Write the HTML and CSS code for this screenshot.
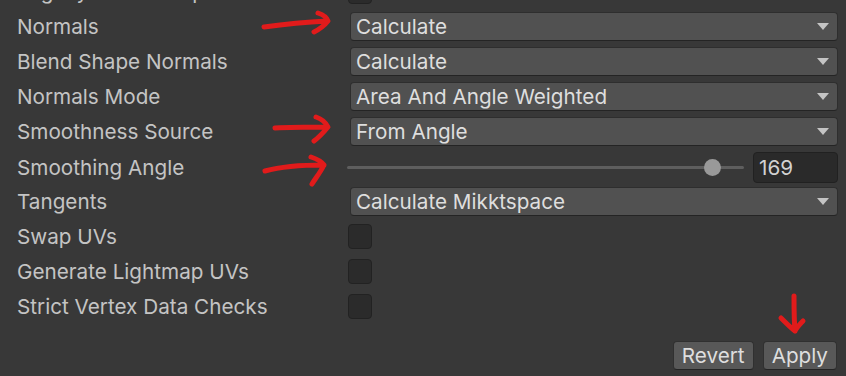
FILE: index.html
```html
<!DOCTYPE html>
<html>
<head>
<title>Model Import Settings: Geometry</title>
<link rel="stylesheet" href="styles.css">
</head>
<body>
<div class="inspector">

<div class="row">
  <span class="label">Legacy Blend Shape Normals</span>
  <span class="check"></span>
</div>

<div class="row">
  <span class="label">Normals</span>
  <div class="popup">Calculate<svg class="caret" width="12" height="7" viewBox="0 0 12 7"><polygon points="0,0 12,0 6,7"/></svg></div>
</div>

<div class="row">
  <span class="label">Blend Shape Normals</span>
  <div class="popup">Calculate<svg class="caret" width="12" height="7" viewBox="0 0 12 7"><polygon points="0,0 12,0 6,7"/></svg></div>
</div>

<div class="row">
  <span class="label">Normals Mode</span>
  <div class="popup">Area And Angle Weighted<svg class="caret" width="12" height="7" viewBox="0 0 12 7"><polygon points="0,0 12,0 6,7"/></svg></div>
</div>

<div class="row">
  <span class="label">Smoothness Source</span>
  <div class="popup">From Angle<svg class="caret" width="12" height="7" viewBox="0 0 12 7"><polygon points="0,0 12,0 6,7"/></svg></div>
</div>

<div class="row">
  <span class="label">Smoothing Angle</span>
  <div class="slider">
    <div class="track"><span class="thumb" style="left: calc((100% - 17px) * 0.939)"></span></div>
    <div class="number">169</div>
  </div>
</div>

<div class="row">
  <span class="label">Tangents</span>
  <div class="popup">Calculate Mikktspace<svg class="caret" width="12" height="7" viewBox="0 0 12 7"><polygon points="0,0 12,0 6,7"/></svg></div>
</div>

<div class="row">
  <span class="label">Swap UVs</span>
  <span class="check"></span>
</div>

<div class="row">
  <span class="label">Generate Lightmap UVs</span>
  <span class="check"></span>
</div>

<div class="row">
  <span class="label">Strict Vertex Data Checks</span>
  <span class="check"></span>
</div>

<div class="buttons">
  <button class="btn">Revert</button>
  <button class="btn">Apply</button>
</div>

</div>

<!-- hand-drawn annotations on top of the screenshot -->
<svg class="marks" width="846" height="376" viewBox="0 0 846 376">
  <path d="M264 27 C285 24 305 22 327 21 M318 13 C324 15 327 18 328 21 C324 26 318 30 314 32"/>
  <path d="M275 128 C292 127 310 127 327 127 M316 117 C322 119 326 123 328 127 C323 133 318 138 314 141"/>
  <path d="M265 171 C283 166 303 165 324 165 M311 157 C317 159 322 162 324 165 C320 173 315 179 312 184"/>
  <path d="M794 296 C794 308 794 320 795 331 M781 318 C786 323 791 328 795 331 C797 327 800 324 803 321"/>
</svg>
</body>
</html>
```

FILE: styles.css
```css
/* Unity dark skin inspector */

body
{ margin: 0;
background-color: #383838;
color: #c4c4c4;
font-family: Inter, "Noto Sans", sans-serif;
font-size: 20.7px;
overflow: hidden;
}

.inspector
{ margin-top: -23px;
padding: 0 8px 0 17px;
display: flex;
flex-direction: column;
gap: 6px;
}

.row
{ display: grid;
grid-template-columns: 332px 1fr;
align-items: center;
height: 29px;
}

.label
{ white-space: nowrap;
}

/* Popups */

.popup
{ display: flex;
align-items: center;
justify-content: space-between;
height: 27px;
margin-left: 1px;
padding: 0 8px 0 5px;
background-color: #515151;
border: 1px solid #2e2e2e;
border-bottom-color: #242424;
border-radius: 4px;
color: #dedede;
}

.caret
{ fill: #c4c4c4;
}

/* Slider */

.slider
{ display: flex;
align-items: center;
gap: 9px;
margin-left: -2px;
}

.track
{ position: relative;
flex: 1;
height: 3px;
background-color: #5e5e5e;
border-radius: 2px;
}

.thumb
{ position: absolute;
top: -7px;
width: 17px;
height: 17px;
border-radius: 50%;
background-color: #999999;
}

.number
{ width: 78px;
height: 29px;
line-height: 29px;
padding-left: 5px;
background-color: #2a2a2a;
border: 1px solid #212121;
border-radius: 4px;
color: #d2d2d2;
}

/* Toggles */

.check
{ width: 22px;
height: 23px;
margin-left: -1px;
background-color: #2b2b2b;
border: 1px solid #222222;
border-radius: 4px;
}

/* Buttons */

.buttons
{ display: flex;
justify-content: flex-end;
gap: 9px;
margin-top: 14px;
margin-right: 1px;
}

.btn
{ height: 29px;
padding: 0 8px;
font-family: inherit;
font-size: 20.7px;
color: #dedede;
background-color: #585858;
border: 1px solid #303030;
border-bottom-color: #242424;
border-radius: 4px;
}

/* Annotations */

.marks
{ position: absolute;
top: 0;
left: 0;
fill: none;
stroke: #e11b1b;
stroke-width: 5;
stroke-linecap: round;
stroke-linejoin: round;
}
```
